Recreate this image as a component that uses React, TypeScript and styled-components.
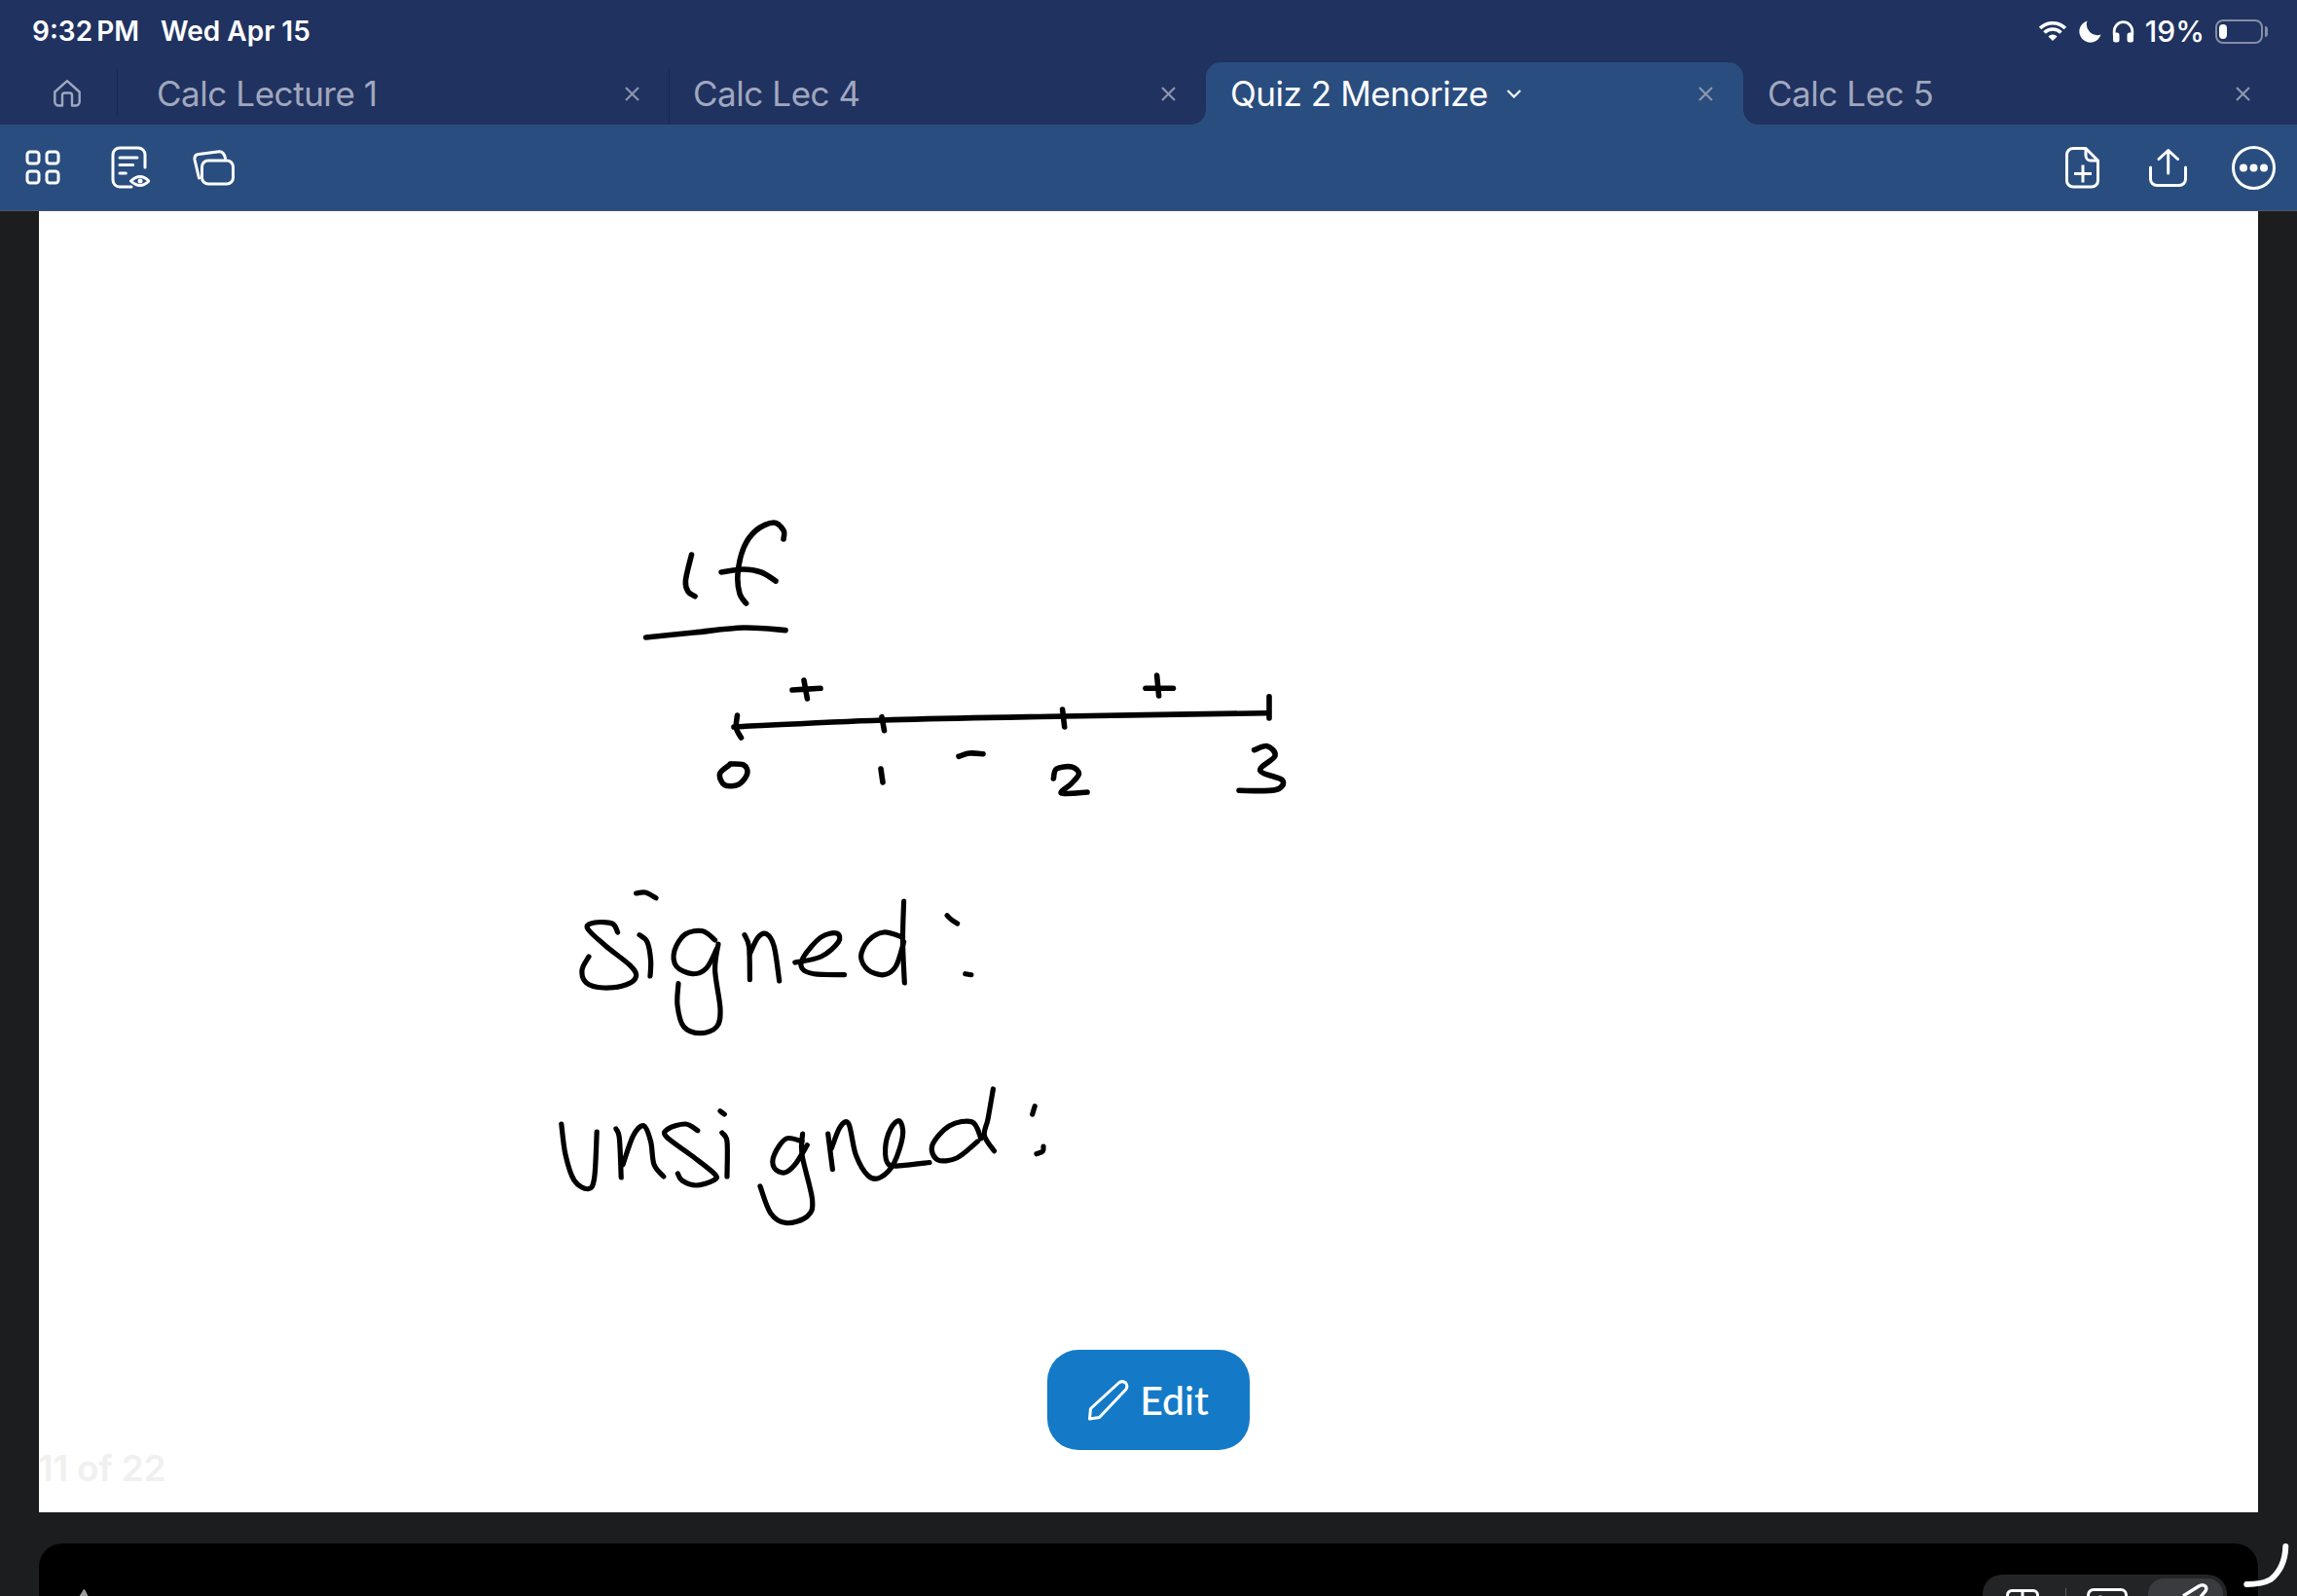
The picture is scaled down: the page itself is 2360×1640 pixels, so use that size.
import React from "react";
import styled, { createGlobalStyle } from "styled-components";

const NAVY = "rgb(32, 50, 96)";
const BLUE = "rgb(41, 77, 127)";
const SIDE = "rgb(28, 29, 31)";

const GlobalStyle = createGlobalStyle`
  html, body {
    margin: 0;
    padding: 0;
    background: ${SIDE};
  }
  body {
    font-family: Inter, "Liberation Sans", sans-serif;
  }
`;

const Screen = styled.div`
  position: relative;
  width: 2360px;
  height: 1640px;
  overflow: hidden;
  display: flex;
  flex-direction: column;
`;

const StatusBar = styled.div`
  height: 64px;
  flex: none;
  background: ${NAVY};
  display: flex;
  align-items: center;
  justify-content: space-between;
  padding: 0 30px 0 33px;
  color: #fff;
  font-size: 28px;
  font-weight: 600;
`;

const Clock = styled.div`
  display: flex;
  gap: 22px;
`;

const Time = styled.span`
  word-spacing: -3px;
`;

const StatusIcons = styled.div`
  display: flex;
  align-items: center;
  gap: 11px;
`;

const Percent = styled.span`
  font-size: 30px;
  font-weight: 500;
`;

const Battery = styled.div`
  position: relative;
  box-sizing: border-box;
  width: 49px;
  height: 25px;
  border: 2px solid rgba(255, 255, 255, 0.45);
  border-radius: 8px;
  padding: 3px 2px;
  margin-right: 5px;

  &::before {
    content: "";
    display: block;
    width: 8px;
    height: 15px;
    background: #fff;
    border-radius: 4px;
  }
  &::after {
    content: "";
    position: absolute;
    right: -7px;
    top: 5px;
    width: 3px;
    height: 11px;
    background: rgba(255, 255, 255, 0.45);
    border-radius: 0 3px 3px 0;
  }
`;

const TabStrip = styled.div`
  height: 64px;
  flex: none;
  background: ${NAVY};
  display: flex;
`;

const HomeCell = styled.div`
  box-sizing: border-box;
  width: 136px;
  flex: none;
  padding: 18px 0 0 55px;
  position: relative;

  &::after {
    content: "";
    position: absolute;
    left: 120px;
    top: 8px;
    height: 48px;
    width: 1px;
    background: rgb(25, 40, 82);
  }
`;

const Tab = styled.div<{ $active?: boolean; $divider?: boolean }>`
  position: relative;
  box-sizing: border-box;
  width: ${(p) => (p.$divider ? "551px" : "552px")};
  flex: none;
  padding-left: 25px;
  display: flex;
  align-items: center;
  gap: 19px;
  font-size: 35px;
  letter-spacing: -0.45px;
  color: ${(p) => (p.$active ? "#fff" : "rgb(160, 168, 190)")};
  background: ${(p) => (p.$active ? BLUE : "transparent")};
  border-radius: ${(p) => (p.$active ? "15px 15px 0 0" : "0")};

  ${(p) =>
    p.$divider &&
    `
    &::after {
      content: "";
      position: absolute;
      right: -1px;
      top: 7px;
      bottom: 0;
      width: 1px;
      background: rgb(25, 40, 82);
    }
  `}

  ${(p) =>
    p.$active &&
    `
    &::before, &::after {
      content: "";
      position: absolute;
      bottom: 0;
      width: 15px;
      height: 15px;
    }
    &::before {
      left: -15px;
      background: radial-gradient(circle at 0 0, ${NAVY} 14.5px, ${BLUE} 15px);
    }
    &::after {
      right: -15px;
      background: radial-gradient(circle at 100% 0, ${NAVY} 14.5px, ${BLUE} 15px);
    }
  `}
`;

const CloseMark = styled.svg`
  position: absolute;
  left: 506px;
  top: 25px;
  width: 15px;
  height: 15px;
`;

const Toolbar = styled.div`
  box-sizing: border-box;
  height: 89px;
  flex: none;
  background: ${BLUE};
  border-bottom: 1px solid rgb(80, 86, 102);
  display: flex;
  align-items: center;
  justify-content: space-between;
  padding: 0 22px 0 26px;
`;

const ToolGroup = styled.div<{ $gap: number }>`
  display: flex;
  align-items: center;
  gap: ${(p) => p.$gap}px;
`;

const Main = styled.div`
  flex: 1;
  background: ${SIDE};
  padding: 0 40px;
  display: flex;
  flex-direction: column;
  min-height: 0;
`;

const Page = styled.div`
  position: relative;
  height: 1337px;
  flex: none;
  background: #fff;
  overflow: hidden;
`;

const Ink = styled.svg`
  display: block;
  width: 2280px;
  height: 1337px;
`;

const PageCount = styled.div`
  position: absolute;
  left: -1px;
  bottom: 23px;
  font-size: 37px;
  font-weight: 600;
  letter-spacing: -0.2px;
  line-height: 45px;
  color: #f0f0f0;
`;

const EditButton = styled.button`
  position: absolute;
  left: 1036px;
  bottom: 64px;
  width: 208px;
  height: 103px;
  border: 0;
  border-radius: 32px;
  background: rgb(20, 122, 199);
  color: #fff;
  display: flex;
  align-items: center;
  justify-content: center;
  gap: 11px;
  padding: 0;
  font-family: Lato, sans-serif;
  font-size: 41px;
  font-weight: 500;
`;

const BottomPanel = styled.div`
  margin-top: 32px;
  height: 54px;
  flex: none;
  overflow: hidden;
  background: #000;
  border-radius: 24px 24px 0 0;
  display: flex;
  align-items: flex-start;
  justify-content: space-between;
  padding: 32px 32px 0 39px;
`;

const MarkerTip = styled.svg`
  margin-top: 15px;
  width: 14px;
  height: 8px;
`;

const PenTray = styled.div`
  width: 251px;
  height: 60px;
  box-sizing: border-box;
  flex: none;
  background: rgb(35, 36, 37);
  border-radius: 20px 20px 0 0;
  padding: 4px 4px 0 24px;
  display: flex;
  align-items: flex-start;
`;

const TrayIcon = styled.svg<{ $left?: number; $top: number }>`
  flex: none;
  margin-left: ${(p) => p.$left ?? 0}px;
  margin-top: ${(p) => p.$top}px;
`;

const TrayDivider = styled.div`
  flex: none;
  margin: 10px 0 0 27px;
  width: 1px;
  height: 20px;
  background: rgb(90, 90, 92);
`;

const TrayActive = styled.div`
  flex: none;
  margin-left: 21px;
  width: 77px;
  height: 40px;
  background: rgb(58, 59, 63);
  border-radius: 16px 16px 0 0;
`;

const CornerStroke = styled.svg`
  position: absolute;
  left: 2300px;
  top: 1580px;
  width: 60px;
  height: 60px;
`;

// pen strokes, in screen coordinates, smoothed when drawn
type Pt = [number, number];

const heavy: Pt[][] = [
  [[710.5, 570], [704.4, 596.7], [707, 608], [714, 612.7]],
  [[805, 554], [805, 545], [794.7, 537], [776.8, 545], [764, 563], [758, 590], [760, 610], [766.6, 620]],
  [[741, 588], [764, 585], [782, 588], [797, 597]],
  [[663.6, 655], [713, 650], [764, 645], [807, 647.6]],
  [[754, 747], [907, 740], [1093, 736], [1302, 732.7]],
  [[757.5, 735], [756.4, 748], [761.5, 758]],
  [[906, 736.7], [908.5, 750.7]],
  [[1091.6, 729], [1093.7, 747]],
  [[1304, 715.7], [1304, 738]],
  [[814, 709], [843, 707.3]],
  [[826, 699], [829.4, 718]],
  [[1177, 707.3], [1205.4, 707.3]],
  [[1188.6, 694], [1190.6, 715]],
  [[985, 777.3], [996, 774], [1010, 774.7]],
  [[751, 785], [739.6, 795], [744.7, 806.7], [759, 806], [767.7, 795], [764, 786], [750, 785]],
  [[905, 790], [907, 804]],
  [[1082.4, 800], [1085.5, 790], [1101, 788], [1108.5, 795], [1101, 805], [1090.6, 815], [1117, 814]],
  [[1288.6, 770.7], [1302, 766.7], [1310, 776.7], [1294.7, 791.7], [1317.6, 801.7], [1310, 811.7], [1273, 812.3]],
];

const signed: Pt[][] = [
  [[653.6, 918], [663, 917], [674, 922.7]],
  [[634.6, 958], [629, 949], [611, 948], [603.6, 954], [622, 971.7], [647, 991.7], [653.6, 1003], [643.6, 1011.7], [620, 1015], [602.5, 1010], [598, 996.7], [605, 983]],
  [[657, 960.7], [665, 968], [668.6, 986.7], [668, 1003]],
  [[734.6, 966], [722, 956.7], [704, 960], [693, 976.7], [695, 993], [711.4, 1000.7], [725.7, 995], [736.4, 975]],
  [[738, 970], [734.6, 996.7], [740, 1036.7], [736.4, 1055], [720, 1061.7], [702.5, 1055], [696, 1033], [697, 1010.7]],
  [[765, 960.7], [769.6, 973], [770.4, 1006.7]],
  [[770.4, 980], [779, 963], [788, 960], [795.4, 973], [800.7, 1008]],
  [[816.8, 989], [843.6, 983], [861.4, 968], [859.6, 959], [843.6, 963], [825.7, 983], [824, 995], [836.4, 1000.7], [867.5, 1001.7]],
  [[927.5, 963], [908, 958], [892, 966.7], [884.6, 983], [892, 996.7], [908, 1001.7], [920.4, 993], [928.6, 968]],
  [[928.6, 926], [927.5, 966.7], [929.3, 1010]],
  [[973, 940.7], [977.5, 945], [983.6, 949]],
  [[991.8, 1000.7], [997.9, 1001.7]],
];

const unsigned: Pt[][] = [
  [[576.8, 1155], [581, 1186.7], [590, 1213], [604.3, 1221.7], [610.7, 1210], [613.2, 1163]],
  [[632.9, 1160], [636.4, 1170], [638.2, 1210]],
  [[640, 1196.7], [650.7, 1166.7], [661.4, 1156.7], [668.6, 1173], [672, 1196.7], [681.8, 1209]],
  [[716.8, 1161.7], [704.3, 1155], [686.4, 1160], [684.6, 1168], [711.4, 1188], [734.6, 1206.7], [732.9, 1213], [715, 1218], [700.7, 1213], [696.4, 1206]],
  [[740, 1141.7], [744.3, 1145]],
  [[741.8, 1164], [747, 1173], [747, 1209]],
  [[824, 1173], [807.9, 1170], [795.4, 1186.7], [795.4, 1200], [806, 1205], [816.8, 1196.7], [829.3, 1176.7]],
  [[824.6, 1165], [824, 1186.7], [834.6, 1233], [829.3, 1250], [807.9, 1256.7], [791.8, 1246.7], [781, 1219]],
  [[850.7, 1165], [855.4, 1201.7]],
  [[854.3, 1180], [863.2, 1158], [872, 1155], [879.3, 1186.7], [891.8, 1208], [904.3, 1210], [918.6, 1195], [927.5, 1166.7], [924, 1151.7], [915, 1160], [909.6, 1180], [913.2, 1196.7], [929.3, 1197.3], [955, 1194.5]],
  [[1007.9, 1170], [999, 1153], [975.7, 1156.7], [957.9, 1176.7], [963.2, 1191.7], [982.9, 1190], [1004.3, 1173]],
  [[1020.4, 1119], [1015, 1150], [1011.4, 1166.7], [1021.4, 1182.7]],
  [[1063.2, 1136.7], [1060.7, 1145]],
  [[1072, 1178], [1071.4, 1183], [1065, 1185.7]],
];

// catmull-rom through the points
const smooth = (pts: Pt[]) => {
  let d = `M${pts[0][0]} ${pts[0][1]}`;
  for (let i = 0; i < pts.length - 1; i++) {
    const p0 = pts[i - 1] || pts[i];
    const p1 = pts[i];
    const p2 = pts[i + 1];
    const p3 = pts[i + 2] || p2;
    const c1x = p1[0] + (p2[0] - p0[0]) / 6;
    const c1y = p1[1] + (p2[1] - p0[1]) / 6;
    const c2x = p2[0] - (p3[0] - p1[0]) / 6;
    const c2y = p2[1] - (p3[1] - p1[1]) / 6;
    d += ` C${c1x} ${c1y} ${c2x} ${c2y} ${p2[0]} ${p2[1]}`;
  }
  return d;
};

const StrokeSet = ({ strokes, width }: { strokes: Pt[][]; width: number }) => (
  <g fill="none" stroke="#000" strokeWidth={width} strokeLinecap="round" strokeLinejoin="round">
    {strokes.map((s, i) => (
      <path key={i} d={smooth(s)} />
    ))}
  </g>
);

const Close = () => (
  <CloseMark viewBox="0 0 15 15" fill="none" stroke="rgb(141, 150, 174)" strokeWidth="2.2">
    <path d="M1 1L14 14M14 1L1 14" />
  </CloseMark>
);

const tabs = [
  { title: "Calc Lecture 1", divider: true },
  { title: "Calc Lec 4" },
  { title: "Quiz 2 Menorize", active: true },
  { title: "Calc Lec 5" },
];

export default function App() {
  return (
    <Screen>
      <GlobalStyle />
      <StatusBar>
        <Clock>
          <Time>9:32 PM</Time>
          <span>Wed Apr 15</span>
        </Clock>
        <StatusIcons>
          <svg width="30" height="20" viewBox="0 0 30 20" fill="none" stroke="#fff" strokeWidth="3.6">
            <path d="M2.100 7.100A18.200 18.200 0 0 1 27.900 7.100" />
            <path d="M6.500 11.500A12 12 0 0 1 23.500 11.500" />
            <path d="M15 20L10.400 15.400A6.500 6.500 0 0 1 19.600 15.400Z" fill="#fff" stroke="none" />
          </svg>
          <svg width="24" height="23" viewBox="0 0 24 23" fill="#fff">
            <path d="M9.500 0.500A11.300 11.300 0 1 0 23.500 14.500A11 11 0 0 1 9.500 0.500Z" />
          </svg>
          <svg width="23" height="23" viewBox="0 0 23 23" fill="#fff">
            <path d="M2.200 15V11A9.300 9.300 0 0 1 20.800 11V15" fill="none" stroke="#fff" strokeWidth="2.800" />
            <rect x="1" y="12.500" width="6.500" height="10" rx="2.500" />
            <rect x="15.500" y="12.500" width="6.500" height="10" rx="2.500" />
          </svg>
          <Percent>19%</Percent>
          <Battery />
        </StatusIcons>
      </StatusBar>

      <TabStrip>
        <HomeCell>
          <svg width="28" height="28" viewBox="0 0 28 28" fill="none" stroke="rgb(160, 168, 190)" strokeWidth="2.4" strokeLinejoin="round">
            <path d="M14 1.200L1.300 12.500V22.500A4 4 0 0 0 5.300 26.500H9V16A2.500 2.500 0 0 1 11.500 13.500H16.500A2.500 2.500 0 0 1 19 16V26.500H22.700A4 4 0 0 0 26.700 22.500V12.500Z" />
          </svg>
        </HomeCell>
        {tabs.map((t) => (
          <Tab key={t.title} $active={t.active} $divider={t.divider}>
            {t.title}
            {t.active && (
              <svg width="15" height="9" viewBox="0 0 15 9" fill="none" stroke="#fff" strokeWidth="2.2">
                <path d="M1 1L7.500 7.500L14 1" />
              </svg>
            )}
            <Close />
          </Tab>
        ))}
      </TabStrip>

      <Toolbar>
        <ToolGroup $gap={44}>
          <svg width="44" height="36" viewBox="0 0 44 36" fill="none" stroke="#fff" strokeWidth="3">
            <rect x="2" y="2" width="12" height="12" rx="3" />
            <rect x="22" y="2" width="12" height="12" rx="3" />
            <rect x="2" y="22" width="12" height="12" rx="3" />
            <rect x="22" y="22" width="12" height="12" rx="3" />
          </svg>
          <svg width="40" height="44" viewBox="0 0 40 44" fill="none" stroke="#fff" strokeWidth="3" strokeLinecap="round">
            <path d="M21 42H9A7 7 0 0 1 2 35V9A7 7 0 0 1 9 2H28A7 7 0 0 1 35 9V22" />
            <path d="M9 12H27M9 19.500H22.700M9 28H15.300" />
            <path d="M20.500 36Q30 27 39 36Q30 45 20.500 36Z" strokeLinejoin="round" />
            <circle cx="30" cy="36" r="2.500" fill="#fff" stroke="none" />
          </svg>
          <svg width="43" height="37" viewBox="0 0 43 37" fill="none" stroke="#fff" strokeWidth="3" strokeLinecap="round">
            <rect x="9.500" y="11" width="32" height="24" rx="6.500" />
            <path d="M6.500 29L2 10Q1.500 5 6 4.500L27 1.700Q32 1.500 33.500 8.500" />
          </svg>
        </ToolGroup>
        <ToolGroup $gap={46}>
          <svg width="40" height="43" viewBox="0 0 40 43" fill="none" stroke="#fff" strokeWidth="3" strokeLinejoin="round">
            <path d="M8 1.500H21L33.500 14V34.500A6.500 6.500 0 0 1 27 41H8A6.500 6.500 0 0 1 1.500 34.500V8A6.500 6.500 0 0 1 8 1.500Z" />
            <path d="M21 1.500V9A5 5 0 0 0 26 14H33.500" />
            <path d="M9 27.500H27M18 18.500V36.500" />
          </svg>
          <svg width="39" height="39" viewBox="0 0 39 39" fill="none" stroke="#fff" strokeWidth="3" strokeLinecap="round" strokeLinejoin="round">
            <path d="M1.500 19V31A6.500 6.500 0 0 0 8 37.500H31A6.500 6.500 0 0 0 37.500 31V19" />
            <path d="M19.700 2.500V25M10 10.500L19.700 1.500L29.500 10.500" />
          </svg>
          <svg width="45" height="45" viewBox="0 0 45 45" fill="none" stroke="#fff" strokeWidth="3">
            <circle cx="22.500" cy="22.500" r="21" />
            <g fill="#fff" stroke="none">
              <circle cx="12" cy="22.500" r="4" />
              <circle cx="22.500" cy="22.500" r="4" />
              <circle cx="33" cy="22.500" r="4" />
            </g>
          </svg>
        </ToolGroup>
      </Toolbar>

      <Main>
        <Page>
          <Ink viewBox="40 217 2280 1337">
            <StrokeSet strokes={heavy} width={5.6} />
            <StrokeSet strokes={signed} width={5.2} />
            <StrokeSet strokes={unsigned} width={5.2} />
          </Ink>
          <PageCount>11 of 22</PageCount>
          <EditButton>
            <svg width="42" height="42" viewBox="0 0 42 42" fill="none" stroke="#fff" strokeWidth="3" strokeLinejoin="round">
              <path d="M1.500 40L2.500 29.500L32 2.500Q35.500 0.500 38.500 3Q41 6 39 9.500L11.500 38.500Z" />
            </svg>
            Edit
          </EditButton>
        </Page>
        <BottomPanel>
          <MarkerTip viewBox="0 0 14 8">
            <path d="M7 0L2 8H12L8.500 1Z" fill="rgb(155, 155, 155)" />
          </MarkerTip>
          <PenTray>
            <TrayIcon $top={11} width="34" height="12" viewBox="0 0 34 12" fill="none" stroke="#fff" strokeWidth="3">
              <path d="M1.500 12V6A4.500 4.500 0 0 1 6 1.500H28A4.500 4.500 0 0 1 32.500 6V12M1.500 9H32.500M17 1.500V12" />
            </TrayIcon>
            <TrayDivider />
            <TrayIcon $left={21} $top={10} width="42" height="14" viewBox="0 0 42 14" fill="none" stroke="#fff" strokeWidth="3">
              <path d="M1.500 14V7A5.500 5.500 0 0 1 7 1.500H35A5.500 5.500 0 0 1 40.500 7V14" />
              <circle cx="14" cy="14" r="5" />
            </TrayIcon>
            <TrayActive>
              <svg width="77" height="40" viewBox="0 0 77 40" fill="none" stroke="#fff" strokeWidth="3.4" strokeLinejoin="round">
                <path d="M36 18L52 8Q56 5.500 59 8Q61 11 58 14L48 26" />
              </svg>
            </TrayActive>
          </PenTray>
        </BottomPanel>
      </Main>

      <CornerStroke viewBox="0 0 60 60" fill="none" stroke="#fff" strokeWidth="6" strokeLinecap="round">
        <path d="M48.300 9C48 22 44 34 33 43C26 47 17 48 8.300 48" />
      </CornerStroke>
    </Screen>
  );
}
